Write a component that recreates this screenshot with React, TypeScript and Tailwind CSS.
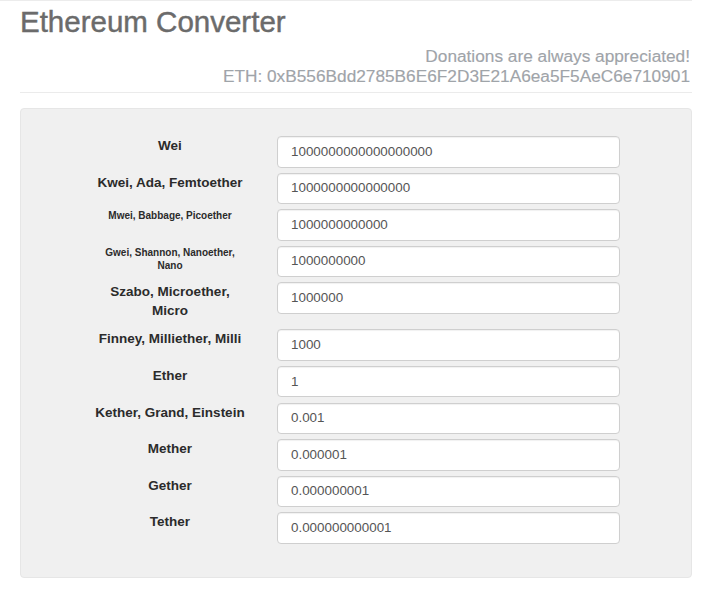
import React from "react";

const rows: { label: string; value: string; small?: boolean; tall?: boolean }[] = [
  { label: "Wei", value: "1000000000000000000" },
  { label: "Kwei, Ada, Femtoether", value: "1000000000000000" },
  { label: "Mwei, Babbage, Picoether", value: "1000000000000", small: true },
  { label: "Gwei, Shannon, Nanoether, Nano", value: "1000000000", small: true },
  { label: "Szabo, Microether, Micro", value: "1000000", tall: true },
  { label: "Finney, Milliether, Milli", value: "1000" },
  { label: "Ether", value: "1" },
  { label: "Kether, Grand, Einstein", value: "0.001" },
  { label: "Mether", value: "0.000001" },
  { label: "Gether", value: "0.000000001" },
  { label: "Tether", value: "0.000000000001" },
];

export default function App() {
  return (
    <div
      className="w-[701px] h-[597px] bg-white overflow-hidden"
      style={{ fontFamily: '"Liberation Sans", Arial, Helvetica, sans-serif' }}
    >
      <div className="w-[692px] h-px bg-[#ececec]" />
      <div className="ml-[20px] w-[672px]">
        <h2 className="text-[29.5px] leading-[34px] text-[#6b6b6b] pt-[4px] h-[45px] [-webkit-text-stroke:0.45px_#6b6b6b]">
          Ethereum Converter
        </h2>
        <div className="text-right text-[17.25px] leading-[20px] text-[#9fa4a9] pr-[2px] [-webkit-text-stroke:0.15px_#9fa4a9]">
          <div>Donations are always appreciated!</div>
          <div>ETH: 0xB556Bdd2785B6E6F2D3E21A6ea5F5AeC6e710901</div>
        </div>
        <div className="mt-[6px] h-px bg-[#ebebeb]" />
        <div className="mt-[15px] h-[470px] rounded-[4px] bg-[#f0f0f0] border border-[#e6e6e6] pt-[27px]">
          {rows.map((r) => (
            <div
              key={r.label}
              className={`flex items-start ${r.tall ? "h-[47px]" : "h-[36.6px]"}`}
            >
              <div
                className={`ml-[72px] w-[154px] text-center font-bold text-[#2b2b2b] ${
                  r.small ? "text-[10px] leading-[13px]" : "text-[13.5px] leading-[19px]"
                }`}
              >
                {r.label}
              </div>
              <div className="ml-[30px] w-[343px] h-[31.5px] rounded-[4px] border border-[#cfcfcf] bg-white shadow-[inset_0_1px_1px_rgba(0,0,0,0.06)] flex items-center pl-[13px] text-[13.4px] text-[#555]">
                {r.value}
              </div>
            </div>
          ))}
        </div>
      </div>
    </div>
  );
}
